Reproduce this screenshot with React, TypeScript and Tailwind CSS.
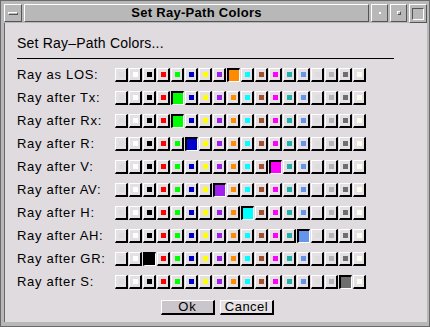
import React from "react";

const COLORS = [
  "", "#ffffff", "#000000", "#ff0000", "#00ff00", "#0000cd", "#ffff00", "#a020f0",
  "#ff8c00", "#00ffff", "#a0522d", "#ff00ff", "#20b2aa", "#6495ed", "hollow", "#b4b4b4",
  "#6e6e6e", "#fffff0",
];

const ROWS: [string, number][] = [
  ["Ray as LOS:", 8],
  ["Ray after Tx:", 4],
  ["Ray after Rx:", 4],
  ["Ray after R:", 5],
  ["Ray after V:", 11],
  ["Ray after AV:", 7],
  ["Ray after H:", 9],
  ["Ray after AH:", 13],
  ["Ray after GR:", 2],
  ["Ray after S:", 16],
];

function Swatch({ color, selected }: { color: string; selected: boolean }) {
  if (selected) {
    return (
      <div
        className="w-[13px] h-[14px] border-t-2 border-l-2 border-b border-r border-t-black border-l-black border-b-white border-r-white box-border"
        style={{ backgroundColor: color }}
      />
    );
  }
  return (
    <div className="w-[13px] h-[14px] box-border border-t border-l border-t-white border-l-white border-b-2 border-r-2 border-b-black border-r-black bg-[#e4e0e4] flex items-center justify-center">
      {color === "" ? null : color === "hollow" ? (
        <div className="w-[6px] h-[6px] border border-[#b0b0b0] box-border" />
      ) : (
        <div className="w-[5px] h-[5px]" style={{ backgroundColor: color }} />
      )}
    </div>
  );
}

export default function App() {
  return (
    <div
      className="w-[430px] h-[327px] bg-[#b8b8b8] relative box-border border border-[#6a6a6a] overflow-hidden"
      style={{ fontFamily: '"Liberation Sans", Arial, sans-serif' }}
    >
      {/* title bar */}
      <div className="absolute left-[3px] top-[3px] right-[2px] h-[18px] flex gap-[2px]">
        <div className="w-[18px] h-[18px] box-border border border-t-white border-l-white border-b-[#555] border-r-[#555] bg-[#b8b8b8] flex items-center justify-center">
          <div className="w-[10px] h-[3px] box-border border border-t-white border-l-white border-b-[#555] border-r-[#555]" />
        </div>
        <div className="flex-1 h-[18px] box-border border border-t-white border-l-white border-b-[#555] border-r-[#555] bg-[#b8b8b8] flex items-center justify-center">
          <span className="text-[13px] font-bold text-black tracking-[0.3px]">Set Ray-Path Colors</span>
        </div>
        <div className="w-[17px] h-[18px] box-border border border-t-white border-l-white border-b-[#555] border-r-[#555] bg-[#b8b8b8] flex items-center justify-center">
          <div className="w-[2px] h-[2px] bg-white" />
        </div>
        <div className="w-[17px] h-[18px] box-border border border-t-white border-l-white border-b-[#555] border-r-[#555] bg-[#b8b8b8] flex items-center justify-center">
          <div className="w-[4px] h-[4px] box-border border border-t-white border-l-white border-b-[#555] border-r-[#555]" />
        </div>
        <div className="w-[18px] h-[19px] box-border border border-t-white border-l-white border-b-[#555] border-r-[#555] bg-[#b8b8b8] flex items-center justify-center">
          <div className="w-[12px] h-[12px] box-border border border-t-[#555] border-l-[#555] border-b-white border-r-white" />
        </div>
      </div>

      {/* content */}
      <div className="absolute left-[3px] top-[22px] right-[2px] bottom-[4px] bg-[#dfdbdf] box-border border-l border-[#6a6a6a] pl-[12px] pt-[11px]">
        <div className="text-[14px] leading-[18px] text-black tracking-[0.2px]">Set Ray–Path Colors...</div>
        <div className="mt-[6px] w-[377px] h-[1px] bg-black" />
        <div className="mt-[9px] flex flex-col gap-[9px]">
          {ROWS.map(([label, sel]) => (
            <div key={label} className="flex items-center h-[14px]">
              <div className="w-[98px] text-[13px] text-black leading-[14px] tracking-[0.7px]">{label}</div>
              <div className="flex gap-[1px]">
                {COLORS.map((c, i) => (
                  <Swatch
                    key={i}
                    color={c === "" || c === "hollow" ? "#dddddd" : c}
                    selected={i === sel}
                  />
                ))}
              </div>
            </div>
          ))}
        </div>
        <div className="mt-[11px] flex gap-[5px] pl-[144px]">
          <div className="w-[54px] h-[15px] box-border border-t border-l border-t-white border-l-white border-b-2 border-r-2 border-b-black border-r-black bg-[#cbc6cc] flex items-center justify-center text-[13px] text-black tracking-[1px]">
            Ok
          </div>
          <div className="w-[54px] h-[15px] box-border border-t border-l border-t-white border-l-white border-b-2 border-r-2 border-b-black border-r-black bg-[#e4e0e4] flex items-center justify-center text-[13px] text-black tracking-[0.5px]">
            Cancel
          </div>
        </div>
      </div>
    </div>
  );
}
